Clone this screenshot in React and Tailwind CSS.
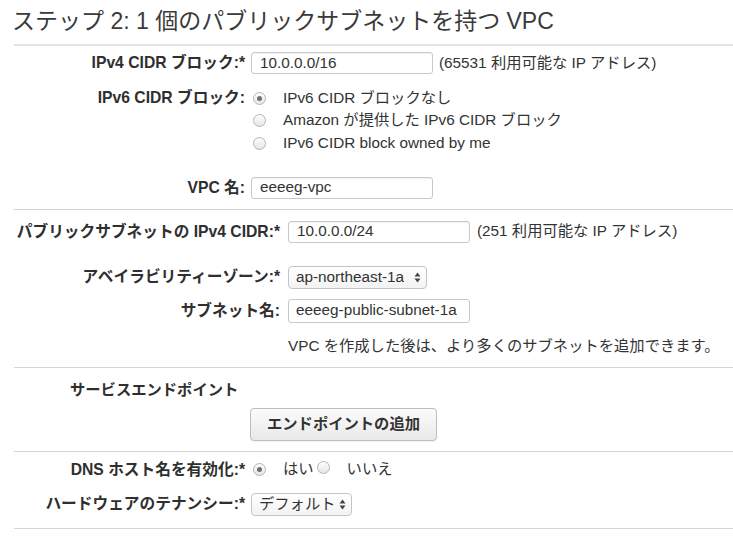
import React from 'react';

const font = { fontFamily: '"Liberation Sans", "Noto Sans CJK JP", Arial, sans-serif' };

function Radio({ checked }) {
  return (
    <span className="inline-flex h-[13px] w-[13px] shrink-0 items-center justify-center rounded-full border border-[#b5b5b5] bg-gradient-to-b from-[#fdfdfd] to-[#e6e6e6]">
      {checked && <span className="h-[5px] w-[5px] rounded-full bg-[#6f6f6f]" />}
    </span>
  );
}

function TextBox({ value, width }) {
  return (
    <div
      className={`flex h-[22px] items-center rounded-[3px] border border-[#c8c8c8] bg-white pl-[8px] text-[15.3px] text-[#333] shadow-[inset_0_1px_1px_rgba(0,0,0,0.06)] ${width}`}
    >
      {value}
    </div>
  );
}

function Select({ value, width }) {
  return (
    <div
      className={`flex h-[23px] items-center justify-between rounded-[4px] border border-[#c4c4c4] bg-gradient-to-b from-white to-[#f3f3f3] pl-[7px] pr-[5px] text-[15.3px] text-[#333] ${width}`}
    >
      <span>{value}</span>
      <svg width="7" height="11" viewBox="0 0 7 11">
        <path d="M3.5 0.5 L6.5 4.5 H0.5 Z" fill="#444" />
        <path d="M3.5 10.5 L6.5 6.5 H0.5 Z" fill="#444" />
      </svg>
    </div>
  );
}

function Row({ label, labelWidth, children, className = '' }) {
  return (
    <div className={`flex items-center ${className}`}>
      <div className={`shrink-0 whitespace-nowrap text-right text-[15.7px] font-bold text-[#2f2f2f] ${labelWidth}`}>{label}</div>
      {children}
    </div>
  );
}

function Rule({ className = '' }) {
  return <div className={`ml-[14px] h-px bg-[#d4d4d4] ${className}`} />;
}

export default function App() {
  return (
    <div className="h-[549px] w-[733px] overflow-hidden bg-white text-[#333]" style={font}>
      <div className="h-[44px] pl-[12px] pt-[7px] text-[23px] leading-[28px] text-[#3a3a3a]">
        ステップ 2: 1 個のパブリックサブネットを持つ VPC
      </div>
      <div className="ml-[14px] h-[2px] bg-[#e2e2e2]" />

      <Row label="IPv4 CIDR ブロック:*" labelWidth="w-[245px]" className="mt-[6px] h-[22px]">
        <div className="ml-[6px]">
          <TextBox value="10.0.0.0/16" width="w-[182px]" />
        </div>
        <span className="ml-[6px] whitespace-nowrap text-[15.3px]">(65531 利用可能な IP アドレス)</span>
      </Row>

      <div className="mt-[13px] flex">
        <div className="w-[245px] shrink-0 text-right text-[15.7px] font-bold leading-[22px] text-[#2f2f2f]">IPv6 CIDR ブロック:</div>
        <div className="ml-[8px] flex flex-col text-[15.3px]">
          {[
            ['IPv6 CIDR ブロックなし', true],
            ['Amazon が提供した IPv6 CIDR ブロック', false],
            ['IPv6 CIDR block owned by me', false],
          ].map(([text, checked]) => (
            <div key={text} className="flex h-[22.5px] items-center">
              <Radio checked={checked} />
              <span className="ml-[17px]">{text}</span>
            </div>
          ))}
        </div>
      </div>

      <Row label="VPC 名:" labelWidth="w-[245px]" className="mt-[22px] h-[22px]">
        <div className="ml-[6px]">
          <TextBox value="eeeeg-vpc" width="w-[182px]" />
        </div>
      </Row>

      <Rule className="mt-[10px]" />

      <Row label="パブリックサブネットの IPv4 CIDR:*" labelWidth="w-[280px]" className="mt-[11px] h-[22px]">
        <div className="ml-[8px]">
          <TextBox value="10.0.0.0/24" width="w-[182px]" />
        </div>
        <span className="ml-[7px] whitespace-nowrap text-[15.3px]">(251 利用可能な IP アドレス)</span>
      </Row>

      <Row label="アベイラビリティーゾーン:*" labelWidth="w-[280px]" className="mt-[23px] h-[23px]">
        <div className="ml-[8px]">
          <Select value="ap-northeast-1a" width="w-[139px]" />
        </div>
      </Row>

      <Row label="サブネット名:" labelWidth="w-[280px]" className="mt-[10px] h-[24px]">
        <div className="ml-[8px]">
          <div className="flex h-[24px] w-[182px] items-center whitespace-nowrap rounded-[3px] border border-[#c8c8c8] bg-white pl-[7px] text-[15.3px]">
            eeeeg-public-subnet-1a
          </div>
        </div>
      </Row>

      <div className="mt-[13px] h-[20px] whitespace-nowrap pl-[288px] text-[15.3px] leading-[20px]">
        VPC を作成した後は、より多くのサブネットを追加できます。
      </div>

      <Rule className="mt-[11px]" />

      <div className="mt-[12px] h-[20px] pl-[70px] text-[15.3px] font-bold leading-[20px] text-[#2f2f2f]">サービスエンドポイント</div>

      <div className="mt-[8px] pl-[250px]">
        <button className="flex h-[33px] w-[187px] items-center justify-center rounded-[4px] border border-[#bdbdbd] bg-gradient-to-b from-[#fbfbfb] to-[#e9e9e9] text-[15.3px] font-bold text-[#333] shadow-[0_1px_1px_rgba(0,0,0,0.06)]">
          エンドポイントの追加
        </button>
      </div>

      <Rule className="mt-[10px]" />

      <Row label="DNS ホスト名を有効化:*" labelWidth="w-[245px]" className="mt-[7px] h-[22px]">
        <div className="ml-[8px] flex items-center text-[15.3px]">
          <Radio checked />
          <span className="ml-[17px]">はい</span>
          <span className="ml-[3px]">
            <Radio checked={false} />
          </span>
          <span className="ml-[17px]">いいえ</span>
        </div>
      </Row>

      <Row label="ハードウェアのテナンシー:*" labelWidth="w-[245px]" className="mt-[12px] h-[23px]">
        <div className="ml-[6px]">
          <Select value="デフォルト" width="w-[101px]" />
        </div>
      </Row>

      <Rule className="mt-[12px]" />
    </div>
  );
}
